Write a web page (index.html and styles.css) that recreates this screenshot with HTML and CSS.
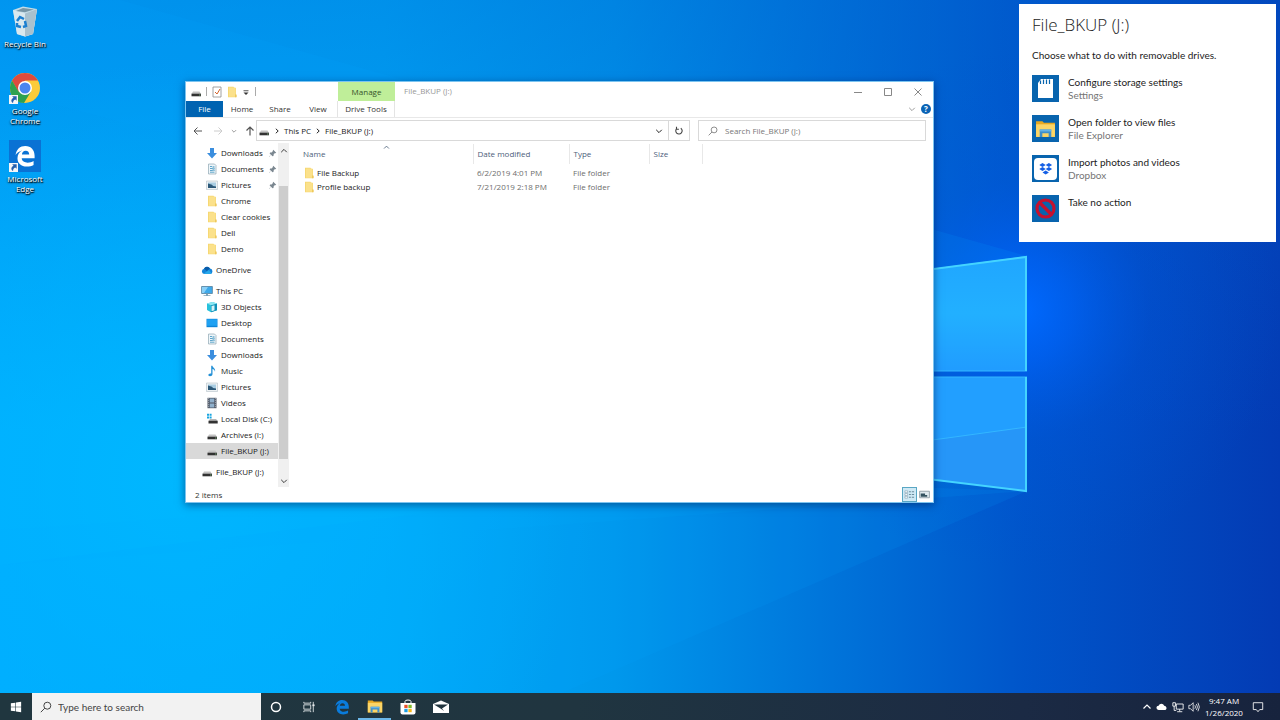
FILE: index.html
```
<!DOCTYPE html>
<html lang="en">
<head>
  <meta charset="utf-8">
  <title>File_BKUP (J:)</title>
  <link rel="stylesheet" href="styles.css">
</head>
<body>

<!-- shared icons -->
<svg class="sprites" aria-hidden="true">
  <symbol id="i-down" viewBox="0 0 12 12"><path d="M4 1h4v5h3L6 11.500 1 6h3z" fill="#3b8ede"/></symbol>
  <symbol id="i-doc" viewBox="0 0 12 12"><path d="M2.500 1h6l1.500 1.500V11h-7.500z" fill="#eef6fa" stroke="#8fa6b3" stroke-width=".7"/><path d="M4 3.500h2M4 5.500h4.500M4 7.500h4.500M4 9.200h4.500" stroke="#4c9bc4" stroke-width=".9"/><path d="M6.500 3h2v5h-2z" fill="#8dbfd8"/></symbol>
  <symbol id="i-pic" viewBox="0 0 12 12"><path d="M.5 2h11v8.500H.5z" fill="#eef2f4" stroke="#b3bfc7" stroke-width=".6"/><path d="M2 3.500h8v5.500h-8z" fill="#a9cde2"/><path d="M2 4.500l4 1.300 1 1.200 3 .5V9H2z" fill="#2c5878"/></symbol>
  <symbol id="i-folder" viewBox="0 0 12 12"><path d="M2 .8h5.500l.8 1.200h1.700v9.200H2z" fill="#f5d66f"/><path d="M2.800 1.500h6.700v7.700h1v1.500H2.800z" fill="#fbe18b"/><path d="M9.300 8.500h1.200v2.700H9.300z" fill="#e9bf4a"/></symbol>
  <symbol id="i-cloud" viewBox="0 0 12 12"><path d="M3.200 10A2.700 2.700 0 0 1 3 4.700 3.400 3.400 0 0 1 9 4.500 2.800 2.800 0 0 1 9.300 10z" fill="#1483d8"/><path d="M2.500 9.700 8 6l2.700 3.500-1.400.5H3.200z" fill="#28a8ea"/><path d="M3 4.700A3.400 3.400 0 0 1 9 4.500L5.800 7z" fill="#0a5ba8"/></symbol>
  <symbol id="i-pc" viewBox="0 0 12 12"><path d="M.6 1.500h10.800v7H.6z" fill="#3ea9ea" stroke="#4c7690" stroke-width=".7"/><path d="M1 2h6L3 8H1z" fill="#8bd0f7"/><path d="M5 8.800h2v1.400h2.500v.8h-7v-.8H5z" fill="#7fa3b8"/></symbol>
  <symbol id="i-3d" viewBox="0 0 12 12"><path d="M1 2.500 6.500 1 11 2.500v6.800L5 11.300 1 9z" fill="#27c1dc"/><path d="M5 4.200l6-1.700v6.800l-6 2z" fill="#0f8fb8"/><path d="M1 2.500 6.500 1 11 2.500 5 4.200z" fill="#8fe6f2"/><path d="M5.500 5l3-.8v5l-3 1z" fill="#d7f4f8"/></symbol>
  <symbol id="i-desk" viewBox="0 0 12 12"><path d="M.5 1.800h11v8.400H.5z" fill="#0d85d8"/><path d="M1 2.300h10v6.500H1z" fill="#1fa1f2"/></symbol>
  <symbol id="i-music" viewBox="0 0 12 12"><path d="M5.200.8h1.200c.4 2 3.500 2.700 2.600 6-.4-1.700-1.400-2.400-2.500-2.700v5c0 1.500-1.200 2.200-2.500 2.200C1.600 11.300 1.700 8.500 5.200 8.600z" fill="#2390d6"/></symbol>
  <symbol id="i-video" viewBox="0 0 12 12"><path d="M1.500.8h9v10.400h-9z" fill="#4a5260"/><path d="M3.700 1.500h4.600v4H3.700zM3.700 6.500h4.600v4H3.700z" fill="#8fb0cc"/><path d="M2.600 1.200v10M9.400 1.200v10" stroke="#c9d0d8" stroke-width=".8" stroke-dasharray="1 1"/></symbol>
  <symbol id="i-drive" viewBox="0 0 12 12"><path d="M3 5.500h6.500l1.500 2.500H1.500z" fill="#c4c4c4"/><path d="M1.500 7.700h9.500v2.600H1.500z" fill="#323232"/><path d="M9 9h1.500" stroke="#8ad08a" stroke-width=".7"/></symbol>
  <symbol id="i-local" viewBox="0 0 12 12"><path d="M1 .8h2v2H1zM3.600.8h2v2h-2zM1 3.400h2v2H1zM3.600 3.400h2v2h-2z" fill="#18a5e0"/><path d="M4 6h6l1.700 2H2.500z" fill="#b5b5b5"/><path d="M2.500 7.800h9.200v2.700H2.500z" fill="#323232"/></symbol>
  <symbol id="i-pin" viewBox="0 0 12 12"><path d="M7 1l4 4-1 .6-.8-.2L7.500 7.200 7.300 9.300 6 9.800 4 7.800 1.500 10.500 1.300 10.300 3.900 7.700 2.200 6l.6-1.300 2-.2L6.600 2.800 6.400 2z" fill="#7b8790"/></symbol>
  <symbol id="i-search" viewBox="0 0 12 12"><circle cx="7.300" cy="4.700" r="3.500" fill="none" stroke="currentColor"/><path d="M4.800 7.200.8 11.200" stroke="currentColor"/></symbol>
  <symbol id="i-explorer" viewBox="0 0 20 18"><path d="M1 2h6l1.500 1.500H19V17H1z" fill="#e8a820"/><path d="M1 5h18v12H1z" fill="#fbd567"/><path d="M4.500 10h11v7h-2.500v-3.500H7V17H4.500z" fill="#3f8fcb"/><path d="M4.500 10h11v1.800h-11z" fill="#64b3e8"/></symbol>
  <symbol id="i-edge" viewBox="0 0 24 24"><path d="M2 11C2.800 5 6.800 1.500 12.300 1.500c6.200 0 9.900 4.400 9.900 10.300v2.700H8.500c.2 3.300 3.200 4.600 6.300 4.600 2.400 0 4.500-.7 6.300-1.700v4.100c-2 1.100-4.400 1.700-7.200 1.700C7.900 23.200 4 19.600 4 14.300c0-3.600 1.900-6.500 5-8.100C5.800 6.900 3.400 8.600 2 11zm6.700-.7h7.800c0-2.400-1.300-4-3.700-4-2.300 0-3.900 1.800-4.100 4z" fill="currentColor"/></symbol>
  <symbol id="i-chevron" viewBox="0 0 10 10"><path d="M1.500 3.500 5 7l3.500-3.500" fill="none" stroke="currentColor" stroke-width="1.200"/></symbol>
  <symbol id="i-crumb" viewBox="0 0 10 10"><path d="M3.500 2.200 6.500 5l-3 2.800" fill="none" stroke="currentColor" stroke-width="1.200"/></symbol>
  <symbol id="i-shortcut" viewBox="0 0 10 10"><path d="M0 0h10v10H0z" fill="#f4f6f8"/><path d="M3.500 1.500h5v5L7 5C5.300 5.700 4.500 7 4.500 9 1.500 7 2.500 4.300 5 3z" fill="#245fae"/></symbol>
</svg>

<div class="desktop">
  <svg class="wallpaper" viewBox="0 0 1280 720" preserveAspectRatio="xMidYMid slice" aria-hidden="true">
    <defs>
      <linearGradient id="base" x1="0" y1="0" x2="1280" y2="0" gradientUnits="userSpaceOnUse">
        <stop offset="0" stop-color="#00b0ff"/>
        <stop offset=".3" stop-color="#00acf9"/>
        <stop offset=".48" stop-color="#0098ec"/>
        <stop offset=".65" stop-color="#0074da"/>
        <stop offset=".8" stop-color="#0055ca"/>
        <stop offset="1" stop-color="#033bb4"/>
      </linearGradient>
      <linearGradient id="top" x1="0" y1="0" x2="0" y2="1">
        <stop offset="0" stop-color="#0060d0" stop-opacity=".36"/>
        <stop offset=".6" stop-color="#0060d0" stop-opacity="0"/>
      </linearGradient>
      <radialGradient id="glow" cx="1020" cy="310" r="260" gradientUnits="userSpaceOnUse">
        <stop offset="0" stop-color="#006aff"/>
        <stop offset=".2" stop-color="#0062f6" stop-opacity=".75"/>
        <stop offset=".5" stop-color="#0055e0" stop-opacity=".3"/>
        <stop offset="1" stop-color="#0050d0" stop-opacity="0"/>
      </radialGradient>
      <radialGradient id="left" cx="180" cy="480" r="420" gradientUnits="userSpaceOnUse">
        <stop offset="0" stop-color="#00b8ff" stop-opacity=".9"/>
        <stop offset="1" stop-color="#00b0ff" stop-opacity="0"/>
      </radialGradient>
      <linearGradient id="pane" x1="0" y1="0" x2="0" y2="1">
        <stop offset="0" stop-color="#20a6ff"/>
        <stop offset=".5" stop-color="#22b0ff"/>
        <stop offset="1" stop-color="#209cff"/>
      </linearGradient>
    </defs>
    <path d="M0 0h1280v720H0z" fill="url(#base)"/>
    <path d="M0 0h1280v720H0z" fill="url(#top)"/>
    <path d="M0 0h1280v720H0z" fill="url(#left)"/>
    <path d="M0 0h1280v720H0z" fill="url(#glow)"/>
    <path d="M120 0 1027 256 760 290 0 90V0z" fill="#00a0ff" opacity=".14"/>
    <path d="M1027 491 0 565V530L900 470z" fill="#00b4ff" opacity=".1"/>
    <path d="M1027 491 500 720H0V565L700 480z" fill="#00a8ff" opacity=".12"/>
    <path d="M780 289 1027 256V371H780z" fill="url(#pane)"/>
    <path d="M780 377H1027V491L780 461z" fill="#229fff"/>
    <path d="M780 461 1027 427V491z" fill="#2696f8"/>
    <path d="M780 461 1027 427M780 377H1027M780 371H1027" stroke="#33b6ff"/>
    <path d="M780 289 1026 257V371M1026 377V491L780 461" fill="none" stroke="#44d4ff" stroke-width="2"/>
  </svg>

  <nav class="shortcuts">
    <a class="shortcut" href="#recycle">
      <svg class="shortcut-icon" viewBox="0 0 32 32"><path d="M4 5 14 1.500 28 4l-4 25-8 2.500L8 29z" fill="#c3dce8"/><path d="M4 5l12 3.500L28 4l-4 25-8 2.500L8 29z" fill="#d9e8ee"/><path d="M16 8.500 28 4l-4 25-8 2.500z" fill="#a9c1ce"/><path d="M7 6 14 3l11 1.500-9 2.800z" fill="#7896a6"/><path d="M8 16l3-4 4 2M16 16l1 5-3 1M12 22l-4-1v-3" fill="none" stroke="#1b7fd0" stroke-width="2.500"/></svg>
      <span>Recycle Bin</span>
    </a>
    <a class="shortcut" href="#chrome">
      <span class="badged">
        <svg class="shortcut-icon" viewBox="0 0 32 32"><circle cx="16" cy="16" r="15" fill="#fbcb3a"/><path d="M3 8.500A15 15 0 0 1 29 8.500H16L9.500 20z" fill="#dd4b3e"/><path d="M3 8.500A15 15 0 0 0 15 31l7-11.500-12.500 0z" fill="#2da14f"/><circle cx="16" cy="16" r="7" fill="#fff"/><circle cx="16" cy="16" r="5.500" fill="#4a86ee"/></svg>
        <svg class="arrow"><use href="#i-shortcut"/></svg>
      </span>
      <span>Google Chrome</span>
    </a>
    <a class="shortcut" href="#edge">
      <span class="badged">
        <svg class="shortcut-icon edge-tile" viewBox="-5 -5 34 34"><use href="#i-edge" width="24" height="24"/></svg>
        <svg class="arrow"><use href="#i-shortcut"/></svg>
      </span>
      <span>Microsoft Edge</span>
    </a>
  </nav>

  <main class="window">
    <header class="titlebar">
      <div class="quick">
        <svg class="icon"><use href="#i-drive"/></svg>
        <i class="bar"></i>
        <svg class="icon" viewBox="0 0 12 12"><path d="M2 1h8v10H2z" fill="#fff" stroke="#8c8c8c" stroke-width=".8"/><path d="M4 6l2 2 3-5" fill="none" stroke="#d2622a"/></svg>
        <svg class="icon"><use href="#i-folder"/></svg>
        <svg class="small" viewBox="0 0 12 12"><path d="M3 4.500h6" stroke="#333"/><path d="M3 6.500h6L6 9.500z" fill="#333"/></svg>
        <i class="bar"></i>
      </div>
      <div class="manage">Manage</div>
      <h1 class="caption">File_BKUP (J:)</h1>
      <div class="controls">
        <button aria-label="Minimize"><svg viewBox="0 0 10 10"><path d="M1 5.500h8"/></svg></button>
        <button aria-label="Maximize"><svg viewBox="0 0 10 10"><path d="M1.500 1.500h7v7h-7z"/></svg></button>
        <button aria-label="Close"><svg viewBox="0 0 10 10"><path d="M1.500 1.500l7 7M8.500 1.500l-7 7"/></svg></button>
      </div>
    </header>

    <div class="tabs">
      <button class="tab file">File</button>
      <button class="tab">Home</button>
      <button class="tab">Share</button>
      <button class="tab">View</button>
      <button class="tab tools">Drive Tools</button>
      <div class="tab-end">
        <button class="plain" aria-label="Expand ribbon"><svg class="tiny"><use href="#i-chevron"/></svg></button>
        <button class="help" aria-label="Help">?</button>
      </div>
    </div>

    <div class="toolbar">
      <div class="history">
        <button class="plain" aria-label="Back"><svg class="small" viewBox="0 0 10 10"><path d="M9 5H1M4.500 1.500 1 5l3.500 3.500" fill="none" stroke="#555"/></svg></button>
        <button class="plain" aria-label="Forward"><svg class="small" viewBox="0 0 10 10"><path d="M1 5H9M5.500 1.500 9 5 5.500 8.500" fill="none" stroke="#ccc"/></svg></button>
        <button class="plain narrow" aria-label="Recent"><svg class="mini"><use href="#i-chevron"/></svg></button>
        <button class="plain" aria-label="Up"><svg class="small" viewBox="0 0 10 10"><path d="M5 9.500V1M1.500 4.500 5 1l3.500 3.500" fill="none" stroke="#555" stroke-width="1.200"/></svg></button>
      </div>
      <div class="address">
        <svg class="icon"><use href="#i-drive"/></svg>
        <svg class="tiny"><use href="#i-crumb"/></svg>
        <a href="#pc">This PC</a>
        <svg class="tiny"><use href="#i-crumb"/></svg>
        <a href="#j">File_BKUP (J:)</a>
        <button class="plain drop" aria-label="Previous locations"><svg class="tiny"><use href="#i-chevron"/></svg></button>
        <button class="refresh" aria-label="Refresh"><svg class="small" viewBox="0 0 10 10"><path d="M3 2.300A3.200 3.200 0 1 0 6.800 2.200M2.500.8v2.400h2.400" fill="none" stroke="#444" stroke-width="1.100"/></svg></button>
      </div>
      <label class="search">
        <svg class="small"><use href="#i-search"/></svg>
        <input type="text" placeholder="Search File_BKUP (J:)" aria-label="Search File_BKUP (J:)">
      </label>
    </div>

    <div class="content">
      <nav class="tree">
        <ul>
          <li><a href="#"><svg class="icon"><use href="#i-down"/></svg>Downloads<svg class="pin"><use href="#i-pin"/></svg></a></li>
          <li><a href="#"><svg class="icon"><use href="#i-doc"/></svg>Documents<svg class="pin"><use href="#i-pin"/></svg></a></li>
          <li><a href="#"><svg class="icon"><use href="#i-pic"/></svg>Pictures<svg class="pin"><use href="#i-pin"/></svg></a></li>
          <li><a href="#"><svg class="icon"><use href="#i-folder"/></svg>Chrome</a></li>
          <li><a href="#"><svg class="icon"><use href="#i-folder"/></svg>Clear cookies</a></li>
          <li><a href="#"><svg class="icon"><use href="#i-folder"/></svg>Dell</a></li>
          <li><a href="#"><svg class="icon"><use href="#i-folder"/></svg>Demo</a></li>
        </ul>
        <ul>
          <li><a class="root" href="#"><svg class="icon"><use href="#i-cloud"/></svg>OneDrive</a></li>
        </ul>
        <ul>
          <li><a class="root" href="#"><svg class="icon"><use href="#i-pc"/></svg>This PC</a></li>
          <li><a href="#"><svg class="icon"><use href="#i-3d"/></svg>3D Objects</a></li>
          <li><a href="#"><svg class="icon"><use href="#i-desk"/></svg>Desktop</a></li>
          <li><a href="#"><svg class="icon"><use href="#i-doc"/></svg>Documents</a></li>
          <li><a href="#"><svg class="icon"><use href="#i-down"/></svg>Downloads</a></li>
          <li><a href="#"><svg class="icon"><use href="#i-music"/></svg>Music</a></li>
          <li><a href="#"><svg class="icon"><use href="#i-pic"/></svg>Pictures</a></li>
          <li><a href="#"><svg class="icon"><use href="#i-video"/></svg>Videos</a></li>
          <li><a href="#"><svg class="icon"><use href="#i-local"/></svg>Local Disk (C:)</a></li>
          <li><a href="#"><svg class="icon"><use href="#i-drive"/></svg>Archives (I:)</a></li>
          <li><a class="selected" href="#"><svg class="icon"><use href="#i-drive"/></svg>File_BKUP (J:)</a></li>
        </ul>
        <ul>
          <li><a class="root" href="#"><svg class="icon"><use href="#i-drive"/></svg>File_BKUP (J:)</a></li>
        </ul>
      </nav>
      <div class="scrollbar">
        <svg class="tiny up"><use href="#i-chevron"/></svg>
        <div class="thumb"></div>
        <svg class="tiny"><use href="#i-chevron"/></svg>
      </div>
      <div class="files">
        <table>
          <thead>
            <tr><th class="name">Name<svg class="sort"><use href="#i-chevron"/></svg></th><th class="date">Date modified</th><th class="type">Type</th><th class="size">Size</th></tr>
          </thead>
          <tbody>
            <tr><td><span class="file-name"><svg class="icon"><use href="#i-folder"/></svg>File Backup</span></td><td>6/2/2019 4:01 PM</td><td>File folder</td><td></td></tr>
            <tr><td><span class="file-name"><svg class="icon"><use href="#i-folder"/></svg>Profile backup</span></td><td>7/21/2019 2:18 PM</td><td>File folder</td><td></td></tr>
          </tbody>
        </table>
      </div>
    </div>

    <footer class="status">
      <span>2 items</span>
      <div class="views">
        <button class="view active" aria-label="Details"><svg viewBox="0 0 12 12"><path d="M1 2h3v2H1zM1 5h3v2H1zM1 8h3v2H1z" fill="#fff" stroke="#7797a8" stroke-width=".6"/><path d="M5.500 3h2M8.500 3h2.500M5.500 6h2M8.500 6h2.500M5.500 9h2M8.500 9h2.500" stroke="#557788" stroke-width=".9"/></svg></button>
        <button class="view" aria-label="Large icons"><svg viewBox="0 0 12 12"><path d="M1.500 3h9v6h-9z" fill="#dfe9ee" stroke="#8c9aa2" stroke-width=".8"/><path d="M2.500 5h4v1.500h2v1.500h-6z" fill="#34515f"/></svg></button>
      </div>
    </footer>
  </main>

  <aside class="autoplay">
    <h2>File_BKUP (J:)</h2>
    <p>Choose what to do with removable drives.</p>
    <button class="action">
      <svg viewBox="0 0 27 27"><path d="M9 4h12v19H6V8z" fill="#fff"/><path d="M8.500 5.500V9M11.500 4.500V9M14.500 4.500V9M17.500 4.500V9" stroke="#0864ae" stroke-width="1.200"/></svg>
      <span>Configure storage settings<small>Settings</small></span>
    </button>
    <button class="action">
      <svg viewBox="0 0 27 27"><use href="#i-explorer" x="3" y="4" width="21" height="19"/></svg>
      <span>Open folder to view files<small>File Explorer</small></span>
    </button>
    <button class="action">
      <svg viewBox="0 0 27 27"><rect x="2" y="3" width="23" height="22" rx="4" fill="#fff"/><path d="M10.500 8l3.200 2-3.200 2-3.200-2zM16.900 8l3.200 2-3.200 2-3.200-2zM10.500 12l3.200 2-3.200 2-3.200-2zM16.900 12l3.200 2-3.200 2-3.200-2zM13.700 15.500l3.200 2-3.200 2-3.200-2z" fill="#155fe5"/></svg>
      <span>Import photos and videos<small>Dropbox</small></span>
    </button>
    <button class="action">
      <svg viewBox="0 0 27 27"><circle cx="13.500" cy="13.500" r="8.500" fill="none" stroke="#c4112f" stroke-width="3.200"/><path d="M7.500 7.500l12 12" stroke="#c4112f" stroke-width="3.200"/></svg>
      <span>Take no action</span>
    </button>
  </aside>
</div>

<footer class="taskbar">
  <button class="task" aria-label="Start"><svg viewBox="0 0 14 14"><path d="M1 2.600 6.300 1.900v4.700H1zM7 1.800 13 1v5.600H7zM1 7.400h5.300v4.700L1 11.400zM7 7.400h6V13l-6-.8z" fill="#fff"/></svg></button>
  <label class="task-search">
    <svg><use href="#i-search"/></svg>
    <input type="text" placeholder="Type here to search" aria-label="Type here to search">
  </label>
  <div class="pinned">
    <button class="task" aria-label="Cortana"><svg viewBox="0 0 12 12"><circle cx="6" cy="6" r="4.500" fill="none" stroke="#fff" stroke-width="1.500"/></svg></button>
    <button class="task" aria-label="Task view"><svg viewBox="0 0 14 14"><path d="M1 4.500h8v5H1zM1 1v1.500h8V1M1 13v-1.500h8V13M12 1v12" fill="none" stroke="#e8ecee"/><path d="M11 4h2.500v2H11z" fill="#e8ecee"/></svg></button>
    <button class="task edge" aria-label="Edge"><svg><use href="#i-edge"/></svg></button>
    <button class="task open" aria-label="File Explorer"><svg><use href="#i-explorer"/></svg></button>
    <button class="task wide" aria-label="Store"><svg viewBox="0 0 16 16"><path d="M5 4V2.500Q5 1 8 1t3 1.500V4" fill="none" stroke="#fff"/><path d="M.5 4h15v9.500q0 2-2 2h-11q-2 0-2-2z" fill="#fff"/><path d="M4.300 5.800h3.300v3.300H4.300z" fill="#e8512a"/><path d="M8.400 5.800h3.300v3.300H8.400z" fill="#7db928"/><path d="M4.300 9.900h3.300v3.300H4.300z" fill="#1c9fe4"/><path d="M8.400 9.900h3.300v3.300H8.400z" fill="#f7b718"/></svg></button>
    <button class="task wide" aria-label="Mail"><svg viewBox="0 0 16 16"><path d="M0 5 8 1.500 16 5v9H0z" fill="#fff"/><path d="M1 5.500h14L9 9.500l2 2.500-3.500-2.500z" fill="#20343e"/></svg></button>
  </div>

  <div class="tray">
    <svg class="up"><use href="#i-chevron"/></svg>
    <svg viewBox="0 0 14 14"><path d="M3 10.500a2.500 2.500 0 0 1 0-5 3.600 3.600 0 0 1 6.600 0 2.700 2.700 0 0 1 1.400 5z" fill="#fff"/></svg>
    <svg viewBox="0 0 14 14"><path d="M5 3.500h8v6H5zM9 9.500v2.500M6 12.500h6M1 2h3v4H1zM2.500 6v5H5" fill="none" stroke="#fff"/></svg>
    <svg viewBox="0 0 14 14"><path d="M1 5h2l3-3v10L3 9H1zM8 5q1.500 2 0 4M9.800 3.500q2.500 3.500 0 7M11.600 2q3.300 5 0 10" fill="none" stroke="#fff" stroke-width=".9"/></svg>
    <time>9:47 AM<br>1/26/2020</time>
    <svg viewBox="0 0 14 14"><path d="M1.500 2h11v8H9L7 12.500 5 10H1.500z" fill="none" stroke="#fff"/></svg>
  </div>
</footer>

</body>
</html>
```
FILE: styles.css
```
* {
  box-sizing: border-box;
}

body {
  margin: 0;
  min-height: 100vh;
  display: flex;
  flex-direction: column;
  font-family: "Open Sans", "Noto Sans", sans-serif;
  font-size: 8px;
  line-height: 12px;
  color: #1a1a1a;
}

button, input {
  font: inherit;
  color: inherit;
  border: 0;
  padding: 0;
  background: none;
}

a {
  color: inherit;
  text-decoration: none;
}

ul {
  list-style: none;
  margin: 0;
  padding: 0;
}

svg {
  display: block;
  flex: none;
}

.sprites {
  position: absolute;
  width: 0;
  height: 0;
}

.icon { width: 12px; height: 12px; }
.small { width: 10px; height: 10px; }
.tiny { width: 8px; height: 8px; }
.mini { width: 6px; height: 6px; }
.up { transform: rotate(180deg); }

/* Desktop */
.desktop {
  position: relative;
  flex: 1;
  overflow: hidden;
}

.wallpaper {
  position: absolute;
  top: 0;
  left: 0;
  width: 100%;
  height: 100vh;
}

.shortcuts {
  position: relative;
  width: 50px;
  padding-top: 5px;
  display: flex;
  flex-direction: column;
  gap: 16px;
}

.shortcut {
  display: flex;
  flex-direction: column;
  align-items: center;
  gap: 2px;
  min-height: 51px;
  text-align: center;
  line-height: 10px;
  color: #fff;
  text-shadow: 0 1px 2px #000, 1px 1px 1px #000;
}

.shortcut + .shortcut + .shortcut {
  margin-top: -2px;
}

.shortcut-icon {
  width: 32px;
  height: 32px;
}

.edge-tile {
  background: #0a72d4;
  color: #fff;
}

.badged {
  position: relative;
}

.arrow {
  position: absolute;
  left: 0;
  bottom: 0;
  width: 9px;
  height: 9px;
}

/* Explorer window */
.window {
  position: absolute;
  left: 185px;
  top: 81px;
  width: 749px;
  display: flex;
  flex-direction: column;
  background: #fff;
  border: 1px solid #7cc4f0;
  box-shadow: 0 2px 8px rgba(0, 20, 70, .5);
}

.titlebar {
  display: flex;
  height: 19px;
}

.quick {
  display: flex;
  align-items: center;
  gap: 3px;
  width: 152px;
  padding-left: 4px;
}

.bar {
  width: 1px;
  height: 9px;
  margin: 0 1px;
  background: #aaa;
}

.manage {
  width: 57px;
  padding-top: 4px;
  background: #bfee99;
  text-align: center;
  color: #35532a;
}

.caption {
  flex: 1;
  margin: 0;
  padding: 3px 9px;
  font-size: 8px;
  font-weight: 400;
  color: #999;
}

.controls {
  display: flex;
}

.controls button {
  width: 30px;
  display: flex;
  align-items: center;
  justify-content: center;
}

.controls svg {
  width: 10px;
  height: 10px;
  fill: none;
  stroke: #888;
}

.tabs {
  display: flex;
  height: 17px;
  border-bottom: 1px solid #e8e8e8;
}

.tab {
  width: 38px;
  color: #333;
}

.file {
  width: 37px;
  background: #0063b1;
  color: #fff;
}

.tools {
  width: 58px;
  border: solid #e4e4e4;
  border-width: 0 1px;
}

.tab-end {
  display: flex;
  align-items: center;
  gap: 5px;
  margin-left: auto;
  padding-right: 2px;
  color: #999;
}

.plain {
  display: flex;
  align-items: center;
  justify-content: center;
}

.help {
  width: 10px;
  height: 10px;
  border-radius: 50%;
  background: #0a63b5;
  color: #fff;
  font-weight: 700;
  line-height: 10px;
}

.toolbar {
  display: flex;
  align-items: center;
  height: 25px;
  padding-right: 7px;
}

.history {
  display: flex;
  width: 70px;
  padding-left: 7px;
  gap: 10px;
  color: #777;
}

.narrow {
  margin: 0 -2px;
}

.address {
  flex: 1;
  display: flex;
  align-items: center;
  gap: 3px;
  height: 21px;
  padding-left: 1px;
  border: 1px solid #d9d9d9;
}

.drop {
  margin: 0 2px 0 auto;
}

.refresh {
  display: flex;
  align-items: center;
  justify-content: center;
  align-self: stretch;
  width: 21px;
  border-left: 1px solid #d9d9d9;
}

.search {
  display: flex;
  align-items: center;
  gap: 7px;
  width: 228px;
  height: 21px;
  margin-left: 8px;
  padding-left: 9px;
  border: 1px solid #d9d9d9;
  color: #777;
}

.search input {
  flex: 1;
}

input::placeholder {
  color: inherit;
  opacity: 1;
}

.content {
  display: flex;
  height: 344px;
}

.tree {
  width: 92px;
  padding-top: 2px;
  display: flex;
  flex-direction: column;
  gap: 5px;
}

.tree a {
  display: flex;
  align-items: center;
  gap: 3px;
  height: 16px;
  padding-left: 20px;
  white-space: nowrap;
}

.tree .root {
  padding-left: 15px;
}

.tree .selected {
  background: #d9d9d9;
}

.pin {
  width: 9px;
  height: 9px;
  margin: 0 1px 0 auto;
}

.scrollbar {
  display: flex;
  flex-direction: column;
  align-items: center;
  width: 11px;
  padding: 4px 0 2px;
  background: #f0f0f0;
  color: #333;
}

.thumb {
  width: 9px;
  height: 273px;
  margin: 31px 0 auto;
  background: #cdcdcd;
}

.files {
  flex: 1;
  padding: 1px 0 0 10px;
}

table {
  border-collapse: collapse;
  table-layout: fixed;
  width: 403px;
}

th, td {
  padding: 0 4px;
  text-align: left;
  font-weight: 400;
  color: #6d6d6d;
}

th {
  position: relative;
  height: 20px;
  border-right: 1px solid #e8e8e8;
  color: #4c607a;
}

.name { width: 174px; }
.date { width: 96px; }
.type { width: 80px; }
.size { width: 53px; }

.sort {
  position: absolute;
  top: 0;
  left: 84px;
  width: 7px;
  height: 7px;
  transform: rotate(180deg);
}

td {
  height: 14px;
}

tbody::before {
  content: "";
  display: block;
  height: 2px;
}

.file-name {
  display: flex;
  align-items: center;
  gap: 2px;
  color: #1a1a1a;
}

.status {
  display: flex;
  align-items: center;
  justify-content: space-between;
  height: 15px;
  padding: 0 1px 0 9px;
  color: #333;
}

.views {
  display: flex;
}

.view {
  width: 15px;
  height: 15px;
  padding: 1px;
}

.active {
  border: 1px solid #5aa7c4;
  background: #cfe9f5;
}

/* AutoPlay panel */
.autoplay {
  position: absolute;
  top: 4px;
  right: 4px;
  width: 257px;
  min-height: 238px;
  padding: 10px 13px 20px;
  display: flex;
  flex-direction: column;
  align-items: flex-start;
  gap: 13px;
  background: #fff;
  font-family: Lato, "Open Sans", sans-serif;
  font-size: 10px;
  line-height: 13px;
  color: #222;
}

.autoplay h2 {
  margin: 0;
  font-family: "Open Sans", sans-serif;
  font-size: 17px;
  font-weight: 300;
  line-height: 22px;
}

.autoplay p {
  margin: 0;
}

.action {
  display: flex;
  gap: 9px;
  text-align: left;
}

.action svg {
  width: 27px;
  height: 27px;
  background: #0864ae;
}

.action span {
  padding-top: 1px;
}

.action small {
  display: block;
  font-size: 10px;
  color: #757575;
}

/* Taskbar */
.taskbar {
  position: relative;
  display: flex;
  height: 27px;
  background: linear-gradient(90deg, #20363f, #203540 45%, #1b2a44 80%, #17233d);
  color: #fff;
}

.pinned {
  display: flex;
  margin-left: -1px;
}

.task {
  display: flex;
  align-items: center;
  justify-content: center;
  width: 33px;
}

.task:first-child {
  width: 32px;
}

.task svg, .task-search svg, .tray svg {
  width: 12px;
  height: 12px;
}

.task.edge svg, .task.open svg, .task.wide svg {
  width: 16px;
  height: 16px;
}

.edge {
  color: #0a7cdc;
}

.open {
  border-bottom: 2px solid #6cb8ea;
}

.task-search {
  position: relative;
  display: flex;
  align-items: center;
  gap: 6px;
  width: 229px;
  padding-left: 8px;
  background: #f2f2f2;
  font-family: Lato, "Open Sans", sans-serif;
  font-size: 10px;
  color: #444;
}

.task-search input {
  flex: 1;
}

.tray {
  display: flex;
  align-items: center;
  gap: 4px;
  margin-left: auto;
  padding-right: 16px;
}

.tray .up {
  width: 10px;
  height: 10px;
}

.tray time {
  width: 40px;
  text-align: center;
}

.tray time + svg {
  margin-left: 4px;
}
```
